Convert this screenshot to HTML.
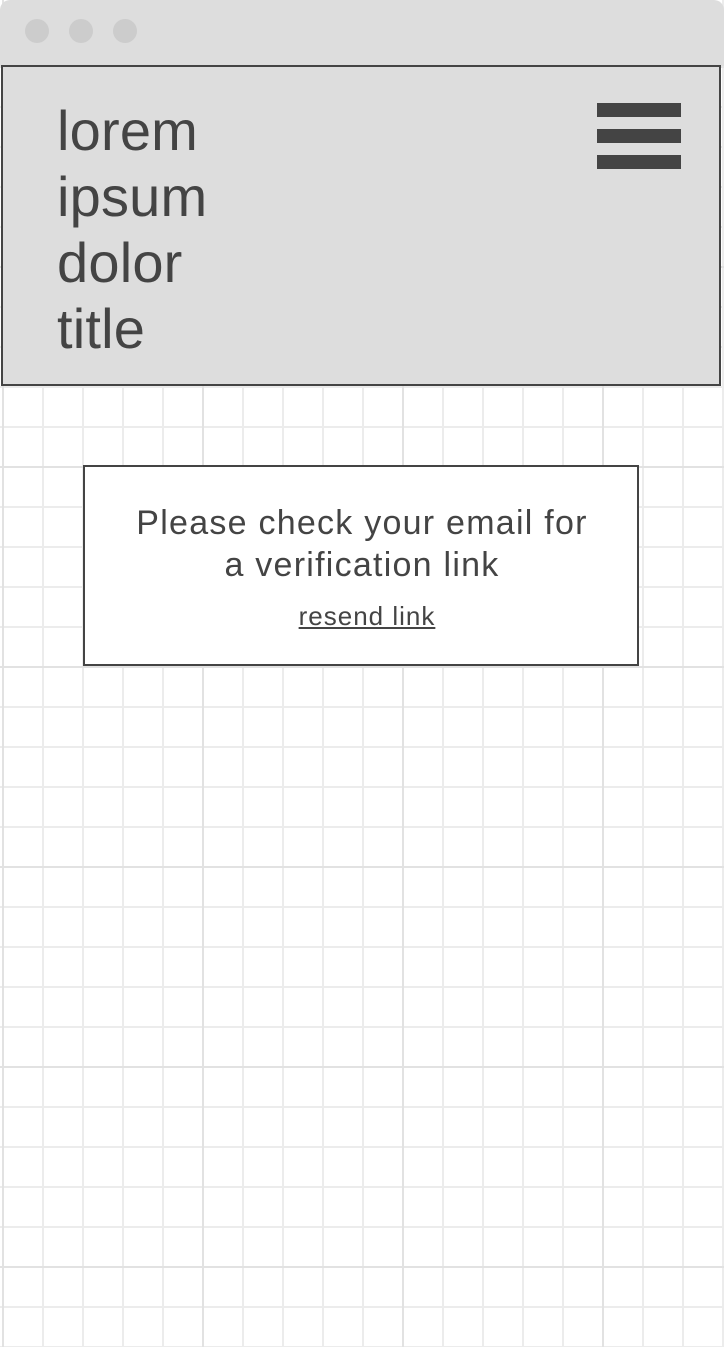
<!DOCTYPE html>
<html><head><meta charset="utf-8"><style>
html,body{margin:0;padding:0}
body{width:724px;height:1347px;position:relative;overflow:hidden;background-color:#fff;
background-image:
linear-gradient(to right,#e2e2e2 2px,transparent 2px),
linear-gradient(to bottom,#e2e2e2 2px,transparent 2px),
linear-gradient(to right,#ececec 2px,transparent 2px),
linear-gradient(to bottom,#ececec 2px,transparent 2px);
background-size:200px 200px,200px 200px,40px 40px,40px 40px;
background-position:2px 66px,2px 66px,2px 26px,2px 26px;
font-family:"Liberation Sans",Arial,sans-serif;color:#444}
.top{position:absolute;left:0;top:0;width:724px;height:66px;background:#ddd;border-radius:10px 10px 0 0}
.dot{position:absolute;top:19px;width:24px;height:24px;border-radius:50%;background:#ccc}
.hdr{position:absolute;left:1px;top:65px;width:716px;height:317px;background:#ddd;border:2px solid #444}
.title{position:absolute;left:57px;top:98px;font-size:56px;line-height:66px;margin:0;letter-spacing:0.2px}
.bar{position:absolute;left:597px;width:84px;height:14px;background:#444}
.box{position:absolute;left:83px;top:465px;width:552px;height:197px;background:#fff;border:2px solid #444}
.msg{position:absolute;left:83px;width:556px;text-align:center}
</style></head><body>
<div class="top"><div class="dot" style="left:25px"></div><div class="dot" style="left:69px"></div><div class="dot" style="left:113px"></div></div>
<div class="hdr"></div>
<div class="title">lorem<br>ipsum<br>dolor<br>title</div>
<div class="bar" style="top:103px"></div><div class="bar" style="top:129px"></div><div class="bar" style="top:155px"></div>
<div class="box"></div>
<div class="msg" style="top:502px;font-size:34px;line-height:42px;letter-spacing:1.25px;padding-left:2px;box-sizing:border-box">Please check your email for<br>a verification link</div>
<div class="msg" style="top:601px;font-size:26px;line-height:30px;text-decoration:underline;letter-spacing:1px;left:95px;width:544px">resend link</div>
</body></html>
